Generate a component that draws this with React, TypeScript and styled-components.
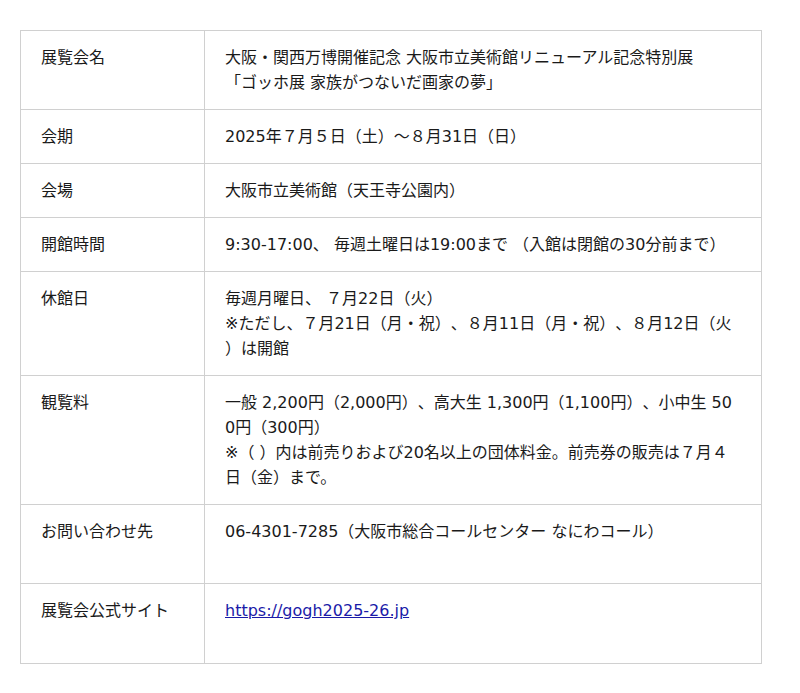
import React from "react";
import styled, { createGlobalStyle } from "styled-components";

const Global = createGlobalStyle`
  html, body { margin: 0; padding: 0; background: #fff; }
  body {
    font-family: "DejaVu Sans", "Noto Sans CJK JP", sans-serif;
    color: #1a1a1a;
    text-spacing-trim: space-all;
  }
`;

const Page = styled.div`
  padding: 30px 38px 30px 20px;
`;

const Table = styled.table`
  width: 742px;
  border-collapse: collapse;
  table-layout: fixed;
  font-size: 16px;
  line-height: 25px;
`;

const Row = styled.tr<{ $tall?: number }>`
  height: ${(p) => (p.$tall ? `${p.$tall}px` : "auto")};
`;

const Label = styled.th`
  width: 184px;
  box-sizing: border-box;
  text-align: left;
  font-weight: normal;
  vertical-align: top;
  padding: 14px 20px;
  border: 1px solid #d0d0d0;
`;

const Value = styled.td`
  vertical-align: top;
  padding: 14px 20px;
  border: 1px solid #d0d0d0;
  word-break: break-all;
  line-break: anywhere;
  text-spacing-trim: space-all;
`;

const Link = styled.a`
  color: #1a1aa8;
  text-decoration: underline;
`;

const rows: { label: string; lines: React.ReactNode[]; tall?: number }[] = [
  {
    label: "展覧会名",
    lines: [
      "大阪・関西万博開催記念 大阪市立美術館リニューアル記念特別展",
      "「ゴッホ展 家族がつないだ画家の夢」",
    ],
  },
  { label: "会期", lines: ["2025年７月５日（土）～８月31日（日）"] },
  { label: "会場", lines: ["大阪市立美術館（天王寺公園内）"] },
  {
    label: "開館時間",
    lines: ["9:30-17:00、 毎週土曜日は19:00まで （入館は閉館の30分前まで）"],
  },
  {
    label: "休館日",
    lines: [
      "毎週月曜日、 ７月22日（火）",
      "※ただし、７月21日（月・祝）、８月11日（月・祝）、８月12日（火）は開館",
    ],
  },
  {
    label: "観覧料",
    lines: [
      "一般 2,200円（2,000円）、高大生 1,300円（1,100円）、小中生 500円（300円）",
      "※（ ）内は前売りおよび20名以上の団体料金。前売券の販売は７月４日（金）まで。",
    ],
  },
  {
    label: "お問い合わせ先",
    lines: ["06-4301-7285（大阪市総合コールセンター なにわコール）"],
    tall: 79,
  },
  {
    label: "展覧会公式サイト",
    lines: [<Link href="#">https://gogh2025-26.jp</Link>],
    tall: 80,
  },
];

export default function App() {
  return (
    <>
      <Global />
      <Page>
        <Table>
          <tbody>
            {rows.map((r) => (
              <Row key={r.label} $tall={r.tall}>
                <Label>{r.label}</Label>
                <Value>
                  {r.lines.map((l, i) => (
                    <React.Fragment key={i}>
                      {i > 0 && <br />}
                      {l}
                    </React.Fragment>
                  ))}
                </Value>
              </Row>
            ))}
          </tbody>
        </Table>
      </Page>
    </>
  );
}
